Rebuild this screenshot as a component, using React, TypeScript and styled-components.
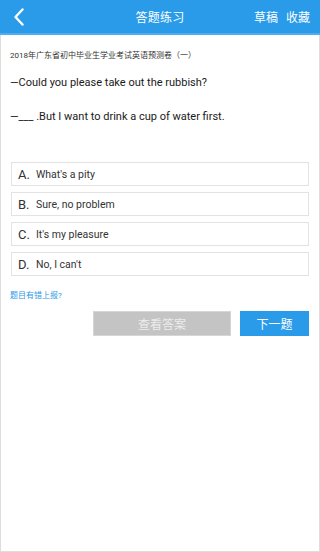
import React from 'react';
import styled, { createGlobalStyle } from 'styled-components';

const GlobalStyle = createGlobalStyle`
  html, body {
    margin: 0;
    padding: 0;
    background: #ffffff;
  }
  body {
    font-family: Roboto, "Noto Sans CJK SC", sans-serif;
  }
`;

interface Option {
  key: string;
  text: string;
}

const options: Option[] = [
  { key: 'A.', text: "What's a pity" },
  { key: 'B.', text: 'Sure, no problem' },
  { key: 'C.', text: "It's my pleasure" },
  { key: 'D.', text: "No, I can't" },
];

function App() {
  return (
    <>
      <GlobalStyle />
      <StPage>
        <StHeader>
          <StBack>
            <svg width="12" height="18" viewBox="0 0 12 18" fill="none">
              <path d="M9.5 1.5 L2.5 9 L9.5 16.5" stroke="#ffffff" strokeWidth="2.4" strokeLinecap="round" strokeLinejoin="round" />
            </svg>
          </StBack>
          <StTitle>答题练习</StTitle>
          <StActions>
            <StAction>草稿</StAction>
            <StAction>收藏</StAction>
          </StActions>
        </StHeader>
        <StBody>
          <StExamName>2018年广东省初中毕业生学业考试英语预测卷（一）</StExamName>
          <StQuestion>—Could you please take out the rubbish?</StQuestion>
          <StQuestion $gap={18}>—___ .But I want to drink a cup of water first.</StQuestion>
          <StOptionList>
            {options.map((o) => (
              <StOption key={o.key}>
                <StOptionKey>{o.key}</StOptionKey>
                <StOptionText>{o.text}</StOptionText>
              </StOption>
            ))}
          </StOptionList>
          <StReport>题目有错上报?</StReport>
          <StButtonRow>
            <StButton $variant="gray">查看答案</StButton>
            <StButton $variant="blue">下一题</StButton>
          </StButtonRow>
        </StBody>
      </StPage>
    </>
  );
}

export default App;

const StPage = styled.div`
  width: 320px;
  height: 552px;
  box-sizing: border-box;
  display: flex;
  flex-direction: column;
  background: #ffffff;
`;

const StHeader = styled.header`
  height: 33px;
  flex-shrink: 0;
  background: #2a9be9;
  border-bottom: 2px solid #4eadf0;
  display: grid;
  grid-template-columns: 1fr auto 1fr;
  align-items: center;
  color: #ffffff;
`;

const StBack = styled.div`
  display: flex;
  align-items: center;
  padding-left: 13px;
  padding-top: 1px;
`;

const StTitle = styled.div`
  font-size: 12px;
  letter-spacing: 0.2px;
`;

const StActions = styled.div`
  display: flex;
  justify-content: flex-end;
  gap: 8px;
  padding-right: 10px;
`;

const StAction = styled.span`
  font-size: 12px;
`;

const StBody = styled.main`
  flex: 1;
  padding: 0 10px;
  border: 1px solid #dddddd;
  border-top: none;
`;

const StExamName = styled.div`
  margin-top: 16px;
  font-size: 8px;
  line-height: 10px;
  color: #333333;
  margin-left: -1px;
`;

const StQuestion = styled.p<{ $gap?: number }>`
  margin: ${(p) => p.$gap ?? 14}px 0 0 -1px;
  font-size: 11px;
  line-height: 16px;
  color: #1a1a1a;
`;

const StOptionList = styled.div`
  margin: 37px 0 0 0;
  display: flex;
  flex-direction: column;
  gap: 6px;
`;

const StOption = styled.div`
  height: 24px;
  box-sizing: border-box;
  border: 1px solid #e3e3e3;
  display: flex;
  align-items: center;
  padding-left: 6px;
`;

const StOptionKey = styled.span`
  font-size: 13px;
  color: #333333;
  width: 18px;
`;

const StOptionText = styled.span`
  font-size: 10.5px;
  color: #333333;
`;

const StReport = styled.div`
  margin-top: 15px;
  font-size: 8px;
  line-height: 10px;
  color: #2a9be9;
  margin-left: -1px;
`;

const StButtonRow = styled.div`
  margin-top: 10px;
  display: flex;
  justify-content: flex-end;
  gap: 9px;
`;

const StButton = styled.button<{ $variant: 'gray' | 'blue' }>`
  height: 25px;
  width: ${(p) => (p.$variant === 'gray' ? 138 : 69)}px;
  border: 1px solid ${(p) => (p.$variant === 'gray' ? '#d6d6d6' : '#2a9be9')};
  background: ${(p) => (p.$variant === 'gray' ? '#c4c4c4' : '#2a9be9')};
  color: ${(p) => (p.$variant === 'gray' ? '#ececec' : '#ffffff')};
  font-family: "Noto Sans CJK SC", sans-serif;
  font-size: 12px;
  padding: 0;
`;
